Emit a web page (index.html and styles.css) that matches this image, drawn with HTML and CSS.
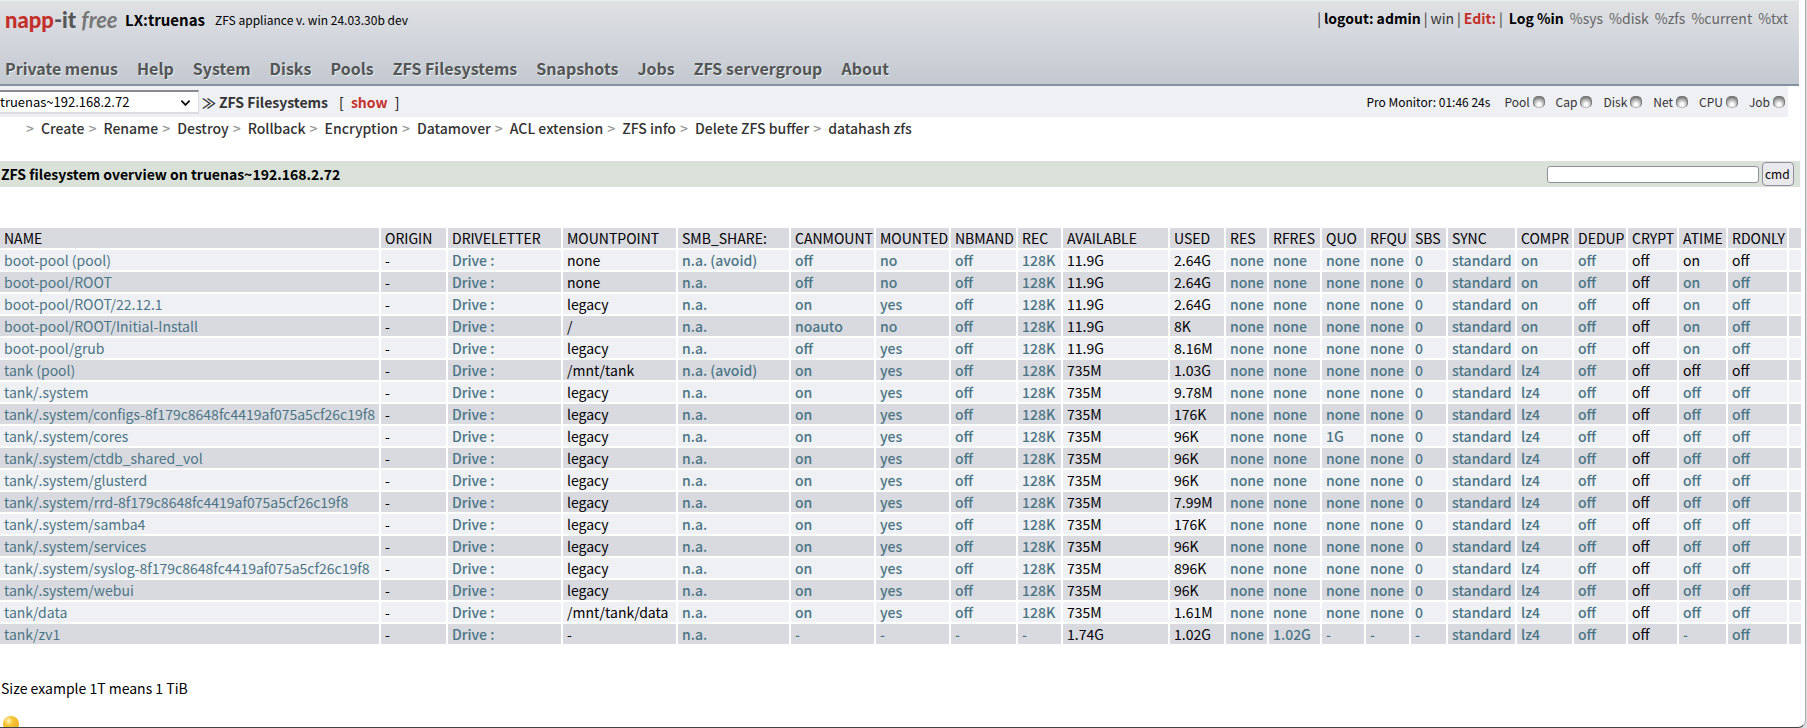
FILE: index.html
```
<!DOCTYPE html>
<html lang="en">
<head>
  <meta charset="UTF-8">
  <meta name="viewport" content="width=device-width, initial-scale=1">
  <title>napp-it free - ZFS Filesystems</title>
  <link rel="stylesheet" href="styles.css">
</head>
<body>
  <div class="page">
    <!-- Header -->
    <header class="header">
      <div class="topline">
        <a class="logo" href="#"><span class="logo-name">napp</span><span class="logo-it">-it</span> <span class="logo-free">free</span></a>
        <span class="host">LX:truenas</span>
        <span class="version">ZFS appliance v. win 24.03.30b dev</span>
        <div class="session">
          <span>|</span><a class="strong" href="#">logout: admin</a><span>|</span><a href="#">win</a><span>|</span><a class="edit" href="#">Edit:</a><span>|</span>
          <div class="logs">
            <a class="strong" href="#">Log %in</a>
            <a href="#">%sys</a>
            <a href="#">%disk</a>
            <a href="#">%zfs</a>
            <a href="#">%current</a>
            <a href="#">%txt</a>
          </div>
        </div>
      </div>
      <nav class="menu">
        <a href="#">Private menus</a>
        <a href="#">Help</a>
        <a href="#">System</a>
        <a href="#">Disks</a>
        <a href="#">Pools</a>
        <a href="#">ZFS Filesystems</a>
        <a href="#">Snapshots</a>
        <a href="#">Jobs</a>
        <a href="#">ZFS servergroup</a>
        <a href="#">About</a>
      </nav>
    </header>

    <!-- Server select and monitor -->
    <div class="bar">
      <div class="server">
        <select aria-label="Server">
          <option>truenas~192.168.2.72</option>
        </select>
        <svg class="chevron" viewBox="0 0 12 8" aria-hidden="true"><path d="M1.5 1.5 6 6l4.500-4.500"/></svg>
      </div>
      <span class="arrows">≫</span>
      <strong class="current">ZFS Filesystems</strong>
      <span class="show">[ <a href="#">show</a> ]</span>
      <div class="monitor">
        <span class="clock">Pro Monitor: 01:46 24s</span>
        <a href="#">Pool<i class="led"></i></a>
        <a href="#">Cap <i class="led"></i></a>
        <a href="#">Disk<i class="led"></i></a>
        <a href="#">Net <i class="led"></i></a>
        <a href="#">CPU<i class="led"></i></a>
        <a href="#">Job <i class="led"></i></a>
      </div>
    </div>

    <nav class="submenu">
      <a href="#">Create</a>
      <a href="#">Rename</a>
      <a href="#">Destroy</a>
      <a href="#">Rollback</a>
      <a href="#">Encryption</a>
      <a href="#">Datamover</a>
      <a href="#">ACL extension</a>
      <a href="#">ZFS info</a>
      <a href="#">Delete ZFS buffer</a>
      <a href="#">datahash zfs</a>
    </nav>

    <form class="title">
      <h1>ZFS filesystem overview on truenas~192.168.2.72</h1>
      <input type="text" aria-label="Command">
      <button type="button">cmd</button>
    </form>

    <!-- Filesystem table, rows are filled by script.js -->
    <table class="zfs">
      <colgroup id="cols"></colgroup>
      <thead><tr id="head"></tr></thead>
      <tbody id="rows"></tbody>
    </table>

    <p class="note">Size example 1T means 1 TiB</p>
    <svg class="bulb" viewBox="0 0 18 11" aria-hidden="true">
      <defs>
        <radialGradient id="glow" cx="35%" cy="30%" r="70%">
          <stop offset="0" stop-color="#fff6c8"/>
          <stop offset="0.400" stop-color="#f7c534"/>
          <stop offset="1" stop-color="#eeb02c"/>
        </radialGradient>
      </defs>
      <circle cx="9" cy="8" r="8" fill="url(#glow)"/>
    </svg>
  </div>
  <script src="script.js"></script>
</body>
</html>
```
FILE: styles.css
```
:root {
  --text: #000;
  --link: #4b7585;
  --red: #c4302b;
  --row-light: #eff0f4;
  --row-dark: #d9dae0;
}

* {
  box-sizing: border-box;
}

body {
  margin: 0;
  background: #dcdde0;
  color: var(--text);
  font-family: "Noto Sans CJK SC", "Open Sans", sans-serif;
  font-size: 14px;
  line-height: 20px;
}

a {
  color: inherit;
  text-decoration: none;
}

a:hover {
  text-decoration: underline;
}

.page {
  min-height: 100vh;
  margin-right: 1px;
  padding-right: 5px;
  background: #fff;
  border-right: 1px solid #aaa;
  border-bottom: 1px solid #444;
  border-bottom-right-radius: 8px;
}

/* Header */
.header {
  height: 86px;
  margin-right: 1px;
  padding: 7px 11px 0 5px;
  border-top: 1px solid #e8eeef;
  border-bottom: 2px solid #8590a2;
  background: linear-gradient(#dfe1e3, #d2d5dc 50%, #c4c8d0);
}

.topline {
  display: flex;
  align-items: center;
  height: 24px;
  white-space: nowrap;
}

.logo {
  width: 120px;
  font-family: Lato, sans-serif;
  font-size: 22px;
  font-weight: 900;
}

.logo-name {
  color: var(--red);
}

.logo-it {
  color: #555;
}

.logo-free {
  color: #777;
  font-style: italic;
  font-weight: 700;
}

.host {
  width: 90px;
  font-size: 15px;
  font-weight: 700;
}

.version {
  font-size: 12px;
}

.session {
  display: flex;
  align-self: flex-start;
  gap: 3px;
  margin-left: auto;
  color: #333;
}

.session .strong {
  color: #000;
  font-weight: 700;
}

.session .edit {
  color: var(--red);
  font-weight: 700;
}

.logs {
  display: flex;
  gap: 6px;
  margin-left: 3px;
  color: #666;
}

.menu {
  display: flex;
  gap: 19px;
  padding-top: 24px;
  color: #555;
  font-size: 16px;
  font-weight: 700;
  line-height: 24px;
  text-shadow: 1px 1px 0 #e2eef0;
  white-space: nowrap;
}

/* Server bar */
.bar {
  display: flex;
  align-items: center;
  height: 31px;
  margin-right: 12px;
  background: var(--row-light);
  white-space: nowrap;
}

.server {
  position: relative;
  width: 199px;
}

.server select {
  display: block;
  width: 100%;
  height: 24px;
  padding: 0;
  appearance: none;
  background: #fff;
  border: solid #8b8b8b;
  border-width: 2px 1px 2px 0;
  border-right-color: #dcdde2;
  border-bottom-color: #dcdde2;
  color: #000;
  font: inherit;
  font-size: 13px;
}

.chevron {
  position: absolute;
  top: 9px;
  right: 8px;
  width: 11px;
  height: 8px;
  fill: none;
  stroke: #111;
  stroke-width: 2;
  pointer-events: none;
}

.arrows {
  width: 20px;
  padding-left: 3px;
  color: #333;
  font-weight: 700;
}

.current {
  color: #333;
}

.show {
  margin-left: 11px;
  white-space: pre;
  word-spacing: 4px;
}

.show a {
  color: var(--red);
  font-weight: 700;
}

.monitor {
  display: flex;
  gap: 11px;
  margin-left: auto;
  padding-right: 3px;
  color: #333;
  font-size: 12px;
}

.monitor a {
  display: flex;
  align-items: center;
  gap: 3px;
}

.clock {
  margin-right: 3px;
  color: #000;
}

.led {
  width: 12px;
  height: 12px;
  border: 1px solid #777;
  border-bottom-color: #bbb;
  border-radius: 5px;
  background: radial-gradient(circle at 50% 75%, #fff 15%, #bbb 50%, #555);
}

.submenu {
  display: flex;
  height: 22px;
  padding: 1px 0 0 26px;
  color: #333;
  font-weight: 500;
  white-space: nowrap;
}

.submenu a::before {
  display: inline-block;
  width: 15px;
  color: #999;
  content: ">";
}

.submenu a {
  margin-right: 4px;
}

/* Title bar */
.title {
  display: flex;
  align-items: center;
  height: 26px;
  margin: 22px 0 39px;
  padding: 0 6px 0 1px;
  background: #d9e1d8;
}

.title h1 {
  flex: 1;
  margin: 0;
  font-size: 14px;
}

.title input {
  width: 212px;
  height: 17px;
  border: 1px solid #8f8f9d;
  border-radius: 3px;
}

.title button {
  width: 32px;
  height: 24px;
  margin-left: 3px;
  padding: 0 4px 0 2px;
  background: #e9e9ed;
  border: 1px solid #8f8f9d;
  border-radius: 4px;
  color: #000;
  font: inherit;
  font-size: 12px;
}

/* Filesystem table */
.zfs {
  width: calc(100% + 5px);
  margin: 0 0 32px -2px;
  table-layout: fixed;
  border-spacing: 2px;
  border-collapse: separate;
  white-space: nowrap;
}

.zfs th,
.zfs td {
  height: 20px;
  padding: 0 0 0 4px;
  background: var(--row-dark);
  font-weight: 400;
  line-height: 20px;
  text-align: left;
}

.zfs tbody tr:nth-child(odd) td {
  background: var(--row-light);
}

.zfs a {
  color: var(--link);
  font-weight: 500;
}

/* The long dataset names only fit in the regular weight */
.zfs td:first-child a {
  font-weight: 400;
}

.note {
  margin: 0;
  padding-left: 1px;
}

.bulb {
  display: block;
  width: 18px;
  height: 11px;
  margin: 18px 0 0 2px;
}
```
FILE: script.js
```
// Column title and width, the name column takes the rest
const columns = [
  ['NAME', 0], ['ORIGIN', 65], ['DRIVELETTER', 113], ['MOUNTPOINT', 113], ['SMB_SHARE:', 111],
  ['CANMOUNT', 83], ['MOUNTED', 73], ['NBMAND', 65], ['REC', 43], ['AVAILABLE', 105],
  ['USED', 54], ['RES', 41], ['RFRES', 51], ['QUO', 42], ['RFQU', 43], ['SBS', 35],
  ['SYNC', 67], ['COMPR', 55], ['DEDUP', 52], ['CRYPT', 49], ['ATIME', 47], ['RDONLY', 59], ['', 12]
];

// Columns that are plain text, not links
const plain = ['ORIGIN', 'MOUNTPOINT', 'AVAILABLE', 'USED', 'CRYPT', ''];

// name, mountpoint, canmount, mounted, available, used, compr, atime
const filesystems = [
  ['boot-pool (pool)', 'none', 'off', 'no', '11.9G', '2.64G', 'on', 'on'],
  ['boot-pool/ROOT', 'none', 'off', 'no', '11.9G', '2.64G', 'on', 'on'],
  ['boot-pool/ROOT/22.12.1', 'legacy', 'on', 'yes', '11.9G', '2.64G', 'on', 'on'],
  ['boot-pool/ROOT/Initial-Install', '/', 'noauto', 'no', '11.9G', '8K', 'on', 'on'],
  ['boot-pool/grub', 'legacy', 'off', 'yes', '11.9G', '8.16M', 'on', 'on'],
  ['tank (pool)', '/mnt/tank', 'on', 'yes', '735M', '1.03G', 'lz4', 'off'],
  ['tank/.system', 'legacy', 'on', 'yes', '735M', '9.78M', 'lz4', 'off'],
  ['tank/.system/configs-8f179c8648fc4419af075a5cf26c19f8', 'legacy', 'on', 'yes', '735M', '176K', 'lz4', 'off'],
  ['tank/.system/cores', 'legacy', 'on', 'yes', '735M', '96K', 'lz4', 'off'],
  ['tank/.system/ctdb_shared_vol', 'legacy', 'on', 'yes', '735M', '96K', 'lz4', 'off'],
  ['tank/.system/glusterd', 'legacy', 'on', 'yes', '735M', '96K', 'lz4', 'off'],
  ['tank/.system/rrd-8f179c8648fc4419af075a5cf26c19f8', 'legacy', 'on', 'yes', '735M', '7.99M', 'lz4', 'off'],
  ['tank/.system/samba4', 'legacy', 'on', 'yes', '735M', '176K', 'lz4', 'off'],
  ['tank/.system/services', 'legacy', 'on', 'yes', '735M', '96K', 'lz4', 'off'],
  ['tank/.system/syslog-8f179c8648fc4419af075a5cf26c19f8', 'legacy', 'on', 'yes', '735M', '896K', 'lz4', 'off'],
  ['tank/.system/webui', 'legacy', 'on', 'yes', '735M', '96K', 'lz4', 'off'],
  ['tank/data', '/mnt/tank/data', 'on', 'yes', '735M', '1.61M', 'lz4', 'off'],
  ['tank/zv1', '-', '-', '-', '1.74G', '1.02G', 'lz4', '-']
];

document.getElementById('cols').innerHTML = columns
  .map(([, width]) => width ? `<col style="width: ${width}px">` : '<col>').join('');
document.getElementById('head').innerHTML = columns
  .map(([title]) => title ? `<th scope="col">${title}</th>` : '<td></td>').join('');

document.getElementById('rows').innerHTML = filesystems.map(fs => {
  const [name, mountpoint, canmount, mounted, available, used, compr, atime] = fs;
  const pool = name.endsWith('(pool)');
  const volume = name === 'tank/zv1';
  const none = volume ? '-' : 'none';
  const values = [
    name, '-', 'Drive :', mountpoint, pool ? 'n.a. (avoid)' : 'n.a.', canmount, mounted,
    volume ? '-' : 'off', volume ? '-' : '128K', available, used, 'none',
    volume ? '1.02G' : 'none', name.endsWith('/cores') ? '1G' : none, none,
    volume ? '-' : '0', 'standard', compr, 'off', 'off', atime, 'off', ''
  ];
  const cells = values.map((value, i) => {
    const title = columns[i][0];
    const text = plain.includes(title) || (pool && (title === 'ATIME' || title === 'RDONLY'));
    return text ? `<td>${value}</td>` : `<td><a href="#">${value}</a></td>`;
  });
  return `<tr>${cells.join('')}</tr>`;
}).join('');
```
